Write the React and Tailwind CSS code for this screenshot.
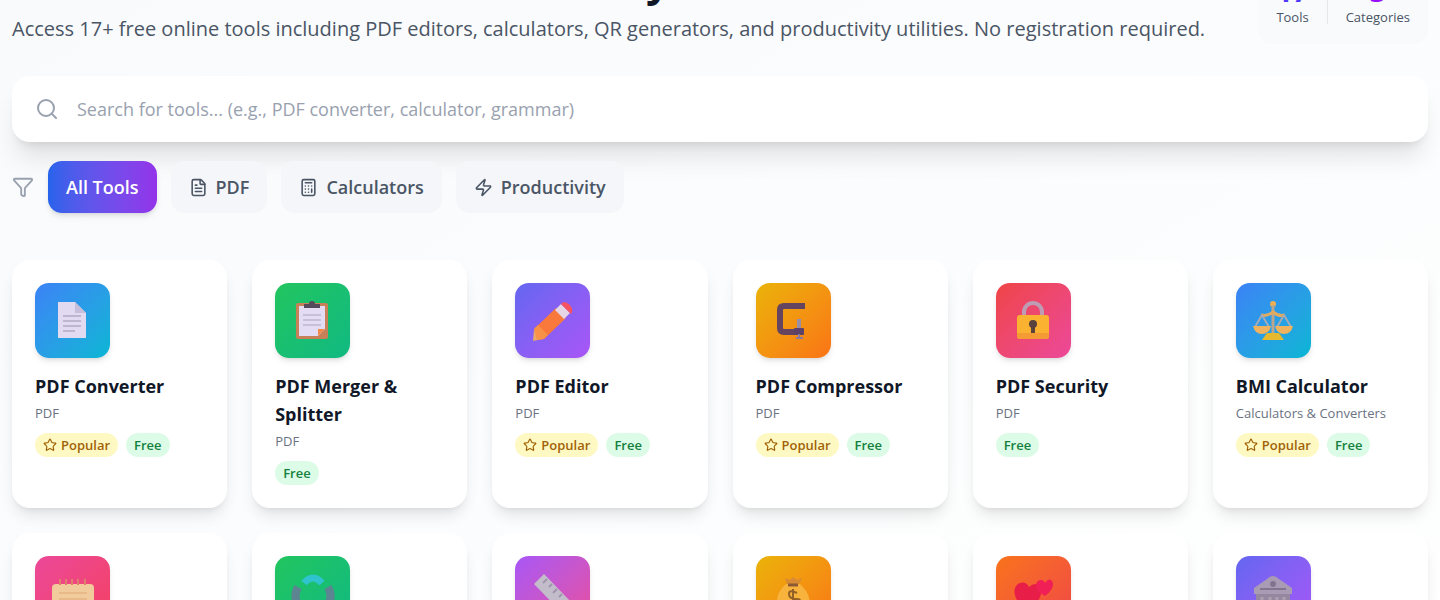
import React from "react";
import { Search, Funnel, FileText, Calculator, Zap, Star } from "lucide-react";

const art = {
  page: (
    <>
      <path d="M4 1h17l11 11v25H4z" fill="#e2daf0" />
      <path d="M21 1l11 11H21z" fill="#c6bedb" />
      <path d="M9 15h18M9 20h18M9 25h18M9 30h12" stroke="#beb5d0" strokeWidth="2" />
    </>
  ),
  clipboard: (
    <>
      <rect x="2" y="2" width="32" height="36" rx="2" fill="#c78058" />
      <path d="M5 5h26v23l-7 7H5z" fill="#e4dcf3" />
      <path d="M31 28l-7 7v-7z" fill="#ef8a4a" />
      <path d="M10 7V3h5a3 3 0 0 1 6 0h5v4z" fill="#55495c" />
      <path d="M9 14h18M9 19h18M9 24h18" stroke="#c5bfd9" strokeWidth="2" />
    </>
  ),
  pencil: (
    <>
      <path d="M-1 40l1-11 9 9z" fill="#e8a96a" />
      <path d="M0 28L22 7l10 10-22 21z" fill="#f9783c" />
      <path d="M0 28l4-4 10 10-4 4-7 1z" fill="#f79248" />
      <path d="M21 9l6-6 9 9-6 6z" fill="#e6d5e4" />
      <path d="M27 3c4-6 15 4 10 10z" fill="#f85260" />
    </>
  ),
  clamp: (
    <>
      <path d="M28 8V5H10q-4 0-4 4v18q0 4 4 4h15" fill="none" stroke="#64445e" strokeWidth="6" />
      <path d="M25 18v12" stroke="#9a8fa6" strokeWidth="4" />
      <rect x="20" y="27" width="10" height="7" rx="1" fill="#5c4169" />
      <path d="M25 33v5M22 37h7" stroke="#897a9c" strokeWidth="2" />
    </>
  ),
  lock: (
    <>
      <path d="M10 17v-6a9 9 0 0 1 18 0v6" fill="none" stroke="#bd9cb4" strokeWidth="4" />
      <rect x="3" y="14" width="32" height="24" rx="3" fill="#fbb231" />
      <path d="M3 32h32v3q0 3-3 3H6q-3 0-3-3z" fill="#f59b33" />
      <circle cx="19" cy="23" r="4" fill="#59413d" />
      <path d="M19 23v9" stroke="#59413d" strokeWidth="4" />
    </>
  ),
  scales: (
    <>
      <circle cx="19" cy="3" r="3" fill="#f2b052" />
      <path d="M19 4v30" stroke="#bba58c" strokeWidth="3" />
      <path d="M7 14q6 2 12-3 6 5 12 3" fill="none" stroke="#e0aa61" strokeWidth="3" />
      <path d="M8 14L1 26M8 14l7 12M30 14l-7 12M30 14l7 12" stroke="#a2abb6" strokeWidth="2" />
      <path d="M-1 25h18q-2 8-9 8t-9-8zM21 25h18q-2 8-9 8t-9-8z" fill="#efb25e" />
      <path d="M13 32h12l5 7H8z" fill="#e4b92f" />
    </>
  ),
  calendar: (
    <>
      <rect x="-2" y="10" width="42" height="30" rx="4" fill="#f2cb9c" />
      <path d="M6 11V5M12 11V5M18 11V5M24 11V5M31 11V5" stroke="#de806b" strokeWidth="2" />
      <path d="M5 19h28M5 25h28M5 32h28" stroke="#e9ba89" strokeWidth="2" />
    </>
  ),
  cycle: (
    <>
      <path d="M10 9q9-10 18 0" fill="none" stroke="#2fc3ce" strokeWidth="7" />
      <path d="M4 13q-6 11 2 20M34 13q6 11-2 20" fill="none" stroke="#5c8591" strokeWidth="8" />
    </>
  ),
  ruler: (
    <>
      <path d="M0 10l10-10 29 30-10 10z" fill="#c3bdcb" />
      <path d="M13 5l-4 4M18 10l-3 3M23 15l-4 4M28 20l-3 3" stroke="#9f95ad" strokeWidth="2" />
    </>
  ),
  money: (
    <>
      <path d="M12 10Q0 21 4 32q3 7 15 7t16-7q3-11-9-22z" fill="#f7b33c" />
      <path d="M13 10l-2-6 5 2 3-3 4 3 5-2-3 6z" fill="#d88a35" />
      <path d="M14 11h10" stroke="#8c5b35" strokeWidth="3" />
      <path d="M23 19q-8-4-8 1t8 5-8 5M19 15v19" fill="none" stroke="#936127" strokeWidth="2" />
    </>
  ),
  hearts: (
    <>
      <path d="M14 38C-3 25-2 12 6 9q6-2 9 4 5-5 10-2c6 5 1 17-11 27z" fill="#e91e48" />
      <path d="M31 22C19 15 21 6 27 6q3 0 4 3 3-5 6-3c5 4 0 12-6 16z" fill="#f01f56" />
    </>
  ),
  building: (
    <>
      <path d="M0 14L13 5q6-6 12 0l13 9v6H0z" fill="#a99bb4" />
      <path d="M2 20h34v20H2z" fill="#94879f" />
      <path d="M8 23v16M16 23v16M23 23v16M30 23v16" stroke="#aba1b3" strokeWidth="3" />
      <path d="M6 15h26" stroke="#837590" strokeWidth="2" />
      <circle cx="19" cy="10" r="3" fill="#82748e" />
    </>
  ),
};

const tools = [
  { name: "PDF Converter", category: "PDF", popular: true, icon: "page", tint: "from-[#3b82f6] to-[#06b6d4]" },
  { name: "PDF Merger & Splitter", category: "PDF", icon: "clipboard", tint: "from-[#22c55e] to-[#10b981]" },
  { name: "PDF Editor", category: "PDF", popular: true, icon: "pencil", tint: "from-[#6366f1] to-[#a855f7]" },
  { name: "PDF Compressor", category: "PDF", popular: true, icon: "clamp", tint: "from-[#eab308] to-[#f97316]" },
  { name: "PDF Security", category: "PDF", icon: "lock", tint: "from-[#ef4444] to-[#ec4899]" },
  { name: "BMI Calculator", category: "Calculators & Converters", popular: true, icon: "scales", tint: "from-[#3b82f6] to-[#06b6d4]" },
  { icon: "calendar", tint: "from-[#ec4899] to-[#f43f5e]" },
  { icon: "cycle", tint: "from-[#22c55e] to-[#10b981]" },
  { icon: "ruler", tint: "from-[#a855f7] to-[#ec4899]" },
  { icon: "money", tint: "from-[#eab308] to-[#f97316]" },
  { icon: "hearts", tint: "from-[#f97316] to-[#ef4444]" },
  { icon: "building", tint: "from-[#6366f1] to-[#a855f7]" },
];

const filters = [
  { label: "PDF", Icon: FileText },
  { label: "Calculators", Icon: Calculator },
  { label: "Productivity", Icon: Zap },
];

function ToolCard({ tool }) {
  return (
    <article className="min-h-[248px] rounded-[18px] bg-white p-[23px] shadow-lg">
      <div className={`flex size-[75px] items-center justify-center rounded-[14px] bg-linear-to-br shadow-md ${tool.tint}`}>
        <svg viewBox="0 0 38 40" className="h-[40px] w-[38px] overflow-visible" aria-hidden="true">
          {art[tool.icon]}
        </svg>
      </div>
      {tool.name && (
        <>
          <h2 className="mt-[14px] text-[18px] leading-[28px] font-bold text-gray-900">{tool.name}</h2>
          <p className="mt-[3px] text-[13px] leading-[20px] whitespace-nowrap text-gray-500">{tool.category}</p>
          <div className="mt-[10px] flex gap-2">
            {tool.popular && (
              <span className="flex items-center gap-1 rounded-full bg-[#fef9c3] px-2 py-[2px] text-[13px] leading-[20px] font-semibold text-[#a16207]">
                <Star className="size-[14px]" />
                Popular
              </span>
            )}
            <span className="rounded-full bg-[#dcfce7] px-2 py-[2px] text-[13px] leading-[20px] font-semibold text-[#15803d]">
              Free
            </span>
          </div>
        </>
      )}
    </article>
  );
}

export default function App() {
  return (
    <main className="min-h-screen overflow-hidden bg-linear-to-br from-slate-50 to-white px-3 pb-6 font-['Open_Sans',sans-serif]">
      <header className="-mt-[48px] flex items-end justify-between">
        <div>
          <h1 className="text-[42px] leading-[56px] font-bold text-gray-900">The Free Online Tools Directory</h1>
          <p className="mt-[6px] text-[20px] leading-[30px] text-gray-600">
            Access 17+ free online tools including PDF editors, calculators, QR generators, and productivity utilities. No registration required.
          </p>
        </div>
        <dl className="flex items-center gap-[18px] rounded-[14px] bg-slate-50 px-[18px] pt-[14px] pb-[17px] text-center">
          <div className="flex flex-col-reverse">
            <dt className="text-[13px] leading-[20px] text-gray-600">Tools</dt>
            <dd className="text-[28px] leading-[32px] font-bold text-indigo-600">17</dd>
          </div>
          <div className="h-[46px] w-px bg-gray-200" />
          <div className="flex flex-col-reverse">
            <dt className="text-[13px] leading-[20px] text-gray-600">Categories</dt>
            <dd className="text-[28px] leading-[32px] font-bold text-purple-600">3</dd>
          </div>
        </dl>
      </header>

      <label className="mt-8 flex h-[66px] items-center gap-[18px] rounded-[18px] bg-white px-[23px] shadow-xl">
        <Search className="size-[24px] text-gray-400" />
        <input
          type="search"
          aria-label="Search for tools"
          placeholder="Search for tools... (e.g., PDF converter, calculator, grammar)"
          className="min-w-0 flex-1 bg-transparent text-[18px] leading-[28px] outline-none placeholder:text-gray-400"
        />
      </label>

      <nav className="mt-[19px] flex items-center gap-[14px]" aria-label="Categories">
        <Funnel className="size-[22px] text-gray-400" />
        <button type="button" className="h-[52px] rounded-[14px] bg-linear-to-r from-[#2563eb] to-[#9333ea] px-[18px] text-[18px] font-semibold text-white shadow-md">
          All Tools
        </button>
        {filters.map(({ label, Icon }) => (
          <button key={label} type="button" className="flex h-[52px] items-center gap-2 rounded-[14px] bg-[#f4f6f9] px-[18px] text-[18px] font-semibold text-gray-600">
            <Icon className="size-[19px]" />
            {label}
          </button>
        ))}
      </nav>

      <section className="mt-[47px] grid grid-cols-6 gap-[25px]">
        {tools.map((tool) => (
          <ToolCard key={tool.icon} tool={tool} />
        ))}
      </section>
    </main>
  );
}
